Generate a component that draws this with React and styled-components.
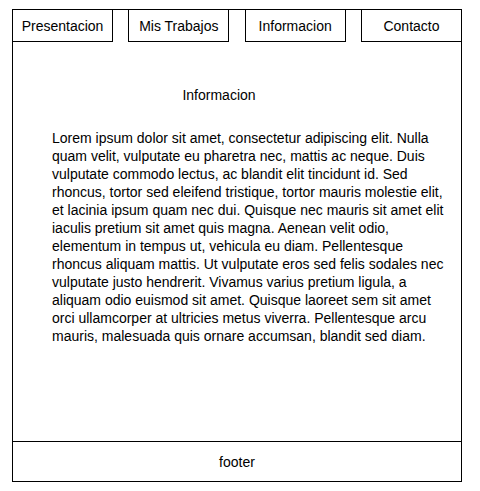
import React from "react";
import styled, { createGlobalStyle } from "styled-components";

const Global = createGlobalStyle`
  html, body { margin: 0; padding: 0; background: #fff; }
  body { font-family: "Liberation Sans", Arial, sans-serif; color: #000; }
  * { box-sizing: border-box; }
`;

const Frame = styled.div`
  margin: 9px 0 0 12px;
  width: 450px;
  height: 473px;
  border: 1px solid #000;
  display: flex;
  flex-direction: column;
`;

const Nav = styled.nav`
  display: flex;
  justify-content: space-between;
  margin: -1px -1px 0;
`;

const NavButton = styled.div`
  width: 101px;
  height: 33px;
  border: 1px solid #000;
  display: flex;
  align-items: center;
  justify-content: center;
  font-size: 14px;
  line-height: 18px;
`;

const Main = styled.main`
  flex: 1;
  padding: 44px 0 0 39px;
`;

const Title = styled.h2`
  margin: 0 75px 25px 0;
  font-size: 14px;
  font-weight: normal;
  line-height: 18px;
  text-align: center;
`;

const Text = styled.p`
  margin: 0;
  width: 396px;
  font-size: 14px;
  line-height: 18px;
`;

const Footer = styled.footer`
  height: 40px;
  border-top: 1px solid #000;
  display: flex;
  align-items: center;
  justify-content: center;
  font-size: 14px;
  line-height: 18px;
`;

const items = ["Presentacion", "Mis Trabajos", "Informacion", "Contacto"];

export default function App() {
  return (
    <>
      <Global />
      <Frame>
        <Nav>
          {items.map((t) => (
            <NavButton key={t}>{t}</NavButton>
          ))}
        </Nav>
        <Main>
          <Title>Informacion</Title>
          <Text>
            Lorem ipsum dolor sit amet, consectetur adipiscing elit. Nulla quam velit, vulputate eu pharetra nec, mattis ac neque. Duis vulputate commodo lectus, ac blandit elit tincidunt id. Sed rhoncus, tortor sed eleifend tristique, tortor mauris molestie elit, et lacinia ipsum quam nec dui. Quisque nec mauris sit amet elit iaculis pretium sit amet quis magna. Aenean velit odio, elementum in tempus ut, vehicula eu diam. Pellentesque rhoncus aliquam mattis. Ut vulputate eros sed felis sodales nec vulputate justo hendrerit. Vivamus varius pretium ligula, a aliquam odio euismod sit amet. Quisque laoreet sem sit amet orci ullamcorper at ultricies metus viverra. Pellentesque arcu mauris, malesuada quis ornare accumsan, blandit sed diam.
          </Text>
        </Main>
        <Footer>footer</Footer>
      </Frame>
    </>
  );
}
